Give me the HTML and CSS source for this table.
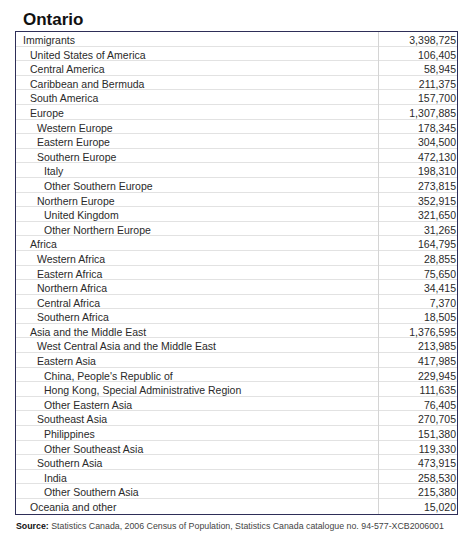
FILE: index.html
```html
<!DOCTYPE html>
<html>
<head>
<meta charset="utf-8">
<link rel="stylesheet" href="styles.css">
</head>
<body>
<div class="page">
  <h1 class="title">Ontario</h1>
  <div class="table">
    <div class="row"><div class="label l0">Immigrants</div><div class="val">3,398,725</div></div>
    <div class="row"><div class="label l1">United States of America</div><div class="val">106,405</div></div>
    <div class="row"><div class="label l1">Central America</div><div class="val">58,945</div></div>
    <div class="row"><div class="label l1">Caribbean and Bermuda</div><div class="val">211,375</div></div>
    <div class="row"><div class="label l1">South America</div><div class="val">157,700</div></div>
    <div class="row"><div class="label l1">Europe</div><div class="val">1,307,885</div></div>
    <div class="row"><div class="label l2">Western Europe</div><div class="val">178,345</div></div>
    <div class="row"><div class="label l2">Eastern Europe</div><div class="val">304,500</div></div>
    <div class="row"><div class="label l2">Southern Europe</div><div class="val">472,130</div></div>
    <div class="row"><div class="label l3">Italy</div><div class="val">198,310</div></div>
    <div class="row"><div class="label l3">Other Southern Europe</div><div class="val">273,815</div></div>
    <div class="row"><div class="label l2">Northern Europe</div><div class="val">352,915</div></div>
    <div class="row"><div class="label l3">United Kingdom</div><div class="val">321,650</div></div>
    <div class="row"><div class="label l3">Other Northern Europe</div><div class="val">31,265</div></div>
    <div class="row"><div class="label l1">Africa</div><div class="val">164,795</div></div>
    <div class="row"><div class="label l2">Western Africa</div><div class="val">28,855</div></div>
    <div class="row"><div class="label l2">Eastern Africa</div><div class="val">75,650</div></div>
    <div class="row"><div class="label l2">Northern Africa</div><div class="val">34,415</div></div>
    <div class="row"><div class="label l2">Central Africa</div><div class="val">7,370</div></div>
    <div class="row"><div class="label l2">Southern Africa</div><div class="val">18,505</div></div>
    <div class="row"><div class="label l1">Asia and the Middle East</div><div class="val">1,376,595</div></div>
    <div class="row"><div class="label l2">West Central Asia and the Middle East</div><div class="val">213,985</div></div>
    <div class="row"><div class="label l2">Eastern Asia</div><div class="val">417,985</div></div>
    <div class="row"><div class="label l3">China, People's Republic of</div><div class="val">229,945</div></div>
    <div class="row"><div class="label l3">Hong Kong, Special Administrative Region</div><div class="val">111,635</div></div>
    <div class="row"><div class="label l3">Other Eastern Asia</div><div class="val">76,405</div></div>
    <div class="row"><div class="label l2">Southeast Asia</div><div class="val">270,705</div></div>
    <div class="row"><div class="label l3">Philippines</div><div class="val">151,380</div></div>
    <div class="row"><div class="label l3">Other Southeast Asia</div><div class="val">119,330</div></div>
    <div class="row"><div class="label l2">Southern Asia</div><div class="val">473,915</div></div>
    <div class="row"><div class="label l3">India</div><div class="val">258,530</div></div>
    <div class="row"><div class="label l3">Other Southern Asia</div><div class="val">215,380</div></div>
    <div class="row last"><div class="label l1">Oceania and other</div><div class="val">15,020</div></div>
  </div>
  <p class="source"><b>Source:</b> Statistics Canada, 2006 Census of Population, Statistics Canada catalogue no. 94-577-XCB2006001</p>
</div>
</body>
</html>
```
FILE: styles.css
```css
html, body {
  margin: 0;
  padding: 0;
  background: #ffffff;
}
.page {
  padding-top: 10px;
  font-family: "Liberation Sans", Arial, sans-serif;
  color: #2a2a2a;
}
.title {
  margin: 0 0 1px 23px;
  height: 20px;
  line-height: 20px;
  font-size: 17px;
  font-weight: bold;
  color: #111;
}
.table {
  margin-left: 15px;
  width: 443px;
  border: 1px solid #2e2e58;
  box-sizing: border-box;
}
.row {
  display: grid;
  grid-template-columns: 363px 1fr;
  height: 14.6px;
  box-sizing: border-box;
  border-bottom: 1px solid #e2e2e2;
  font-size: 10.5px;
  line-height: 14px;
}
.row.last {
  border-bottom: none;
}
.label {
  border-right: 1px solid #d4d4d4;
  white-space: nowrap;
  padding-top: 1px;
}
.l0 { padding-left: 7px; }
.l1 { padding-left: 14px; }
.l2 { padding-left: 21px; }
.l3 { padding-left: 28px; }
.val {
  text-align: right;
  padding-right: 1px;
  padding-top: 1px;
}
.source {
  margin: 6px 0 0 16px;
  font-size: 8.8px;
  line-height: 11px;
  color: #444;
  white-space: nowrap;
}
.source b {
  color: #111;
}
```
